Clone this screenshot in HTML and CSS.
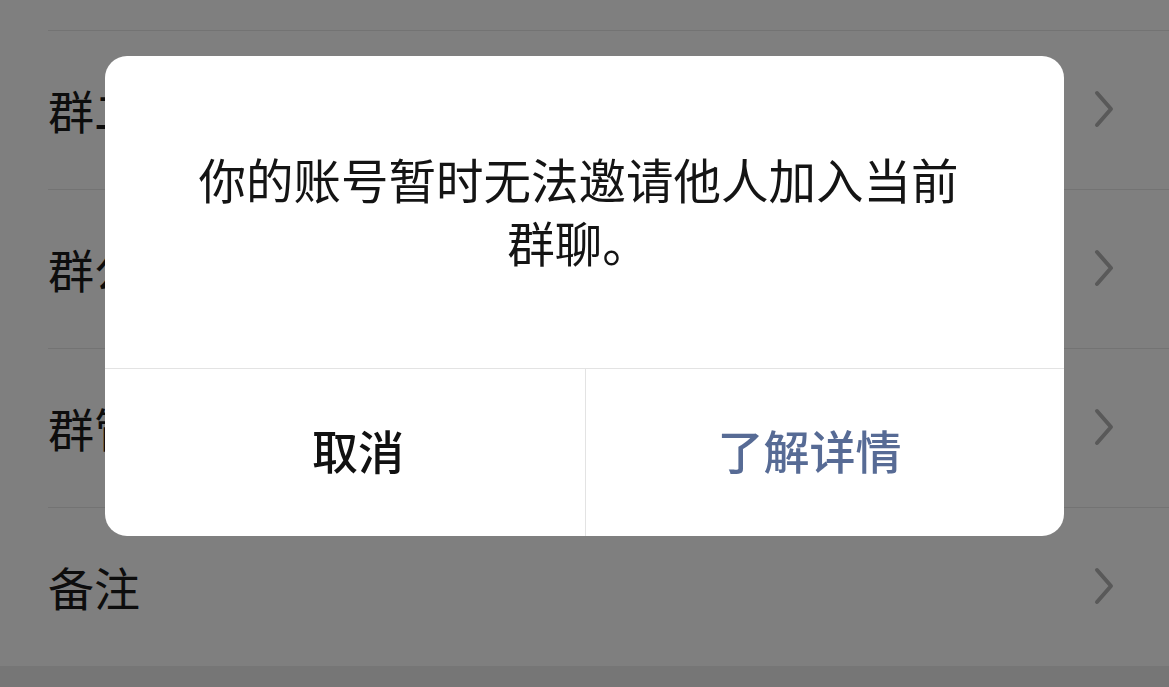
FILE: index.html
```html
<!DOCTYPE html>
<html lang="zh-CN">
<head>
<meta charset="utf-8">
<title>群聊信息</title>
<link rel="stylesheet" href="styles.css">
</head>
<body>
<div class="page">
  <div class="list">
    <div class="spacer"></div>
    <div class="row"><span class="label">群二维码</span><svg class="chev" viewBox="0 0 24 40" width="24" height="40"><path d="M5 4 L19 20 L5 36" fill="none" stroke="#b2b2b2" stroke-width="4" stroke-linecap="round" stroke-linejoin="round"/></svg></div>
    <div class="row"><span class="label">群公告</span><svg class="chev" viewBox="0 0 24 40" width="24" height="40"><path d="M5 4 L19 20 L5 36" fill="none" stroke="#b2b2b2" stroke-width="4" stroke-linecap="round" stroke-linejoin="round"/></svg></div>
    <div class="row"><span class="label">群管理</span><svg class="chev" viewBox="0 0 24 40" width="24" height="40"><path d="M5 4 L19 20 L5 36" fill="none" stroke="#b2b2b2" stroke-width="4" stroke-linecap="round" stroke-linejoin="round"/></svg></div>
    <div class="row"><span class="label">备注</span><svg class="chev" viewBox="0 0 24 40" width="24" height="40"><path d="M5 4 L19 20 L5 36" fill="none" stroke="#b2b2b2" stroke-width="4" stroke-linecap="round" stroke-linejoin="round"/></svg></div>
  </div>
</div>
<div class="mask">
  <div class="dialog">
    <div class="msg"><p class="msg-text">你的账号暂时无法邀请他人加入当前群聊。</p></div>
    <div class="actions">
      <div class="btn cancel">取消</div>
      <div class="btn primary">了解详情</div>
    </div>
  </div>
</div>
</body>
</html>
```

FILE: styles.css
```css
* { box-sizing: border-box; }
html, body {
  margin: 0;
  padding: 0;
  width: 1169px;
  height: 687px;
  overflow: hidden;
  background: #ededed;
  font-family: "Noto Sans CJK SC", "Noto Sans", sans-serif;
}
.page {
  height: 687px;
}
.list {
  background: #ffffff;
}
.spacer {
  height: 30px;
}
.row {
  height: 159px;
  margin-left: 48px;
  border-top: 1px solid #e6e6e6;
  display: flex;
  align-items: center;
  justify-content: space-between;
  padding-right: 53px;
  padding-bottom: 2px;
}
.label {
  font-size: 46px;
  color: #1a1a1a;
  line-height: 1;
}
.chev {
  display: block;
}
.mask {
  position: fixed;
  inset: 0;
  background: rgba(0, 0, 0, 0.5);
  display: flex;
  justify-content: center;
  align-items: flex-start;
  padding-top: 56px;
}
.dialog {
  width: 959px;
  background: #ffffff;
  border-radius: 22px;
  overflow: hidden;
}
.msg {
  height: 313px;
  padding: 0 96px 5px 84px;
  display: flex;
  align-items: center;
  justify-content: center;
  border-bottom: 1px solid #e3e3e3;
}
.msg-text {
  margin: 0;
  text-align: center;
  font-size: 47.5px;
  line-height: 63px;
  color: #141414;
}
.actions {
  display: flex;
  height: 167px;
}
.btn {
  display: flex;
  align-items: center;
  justify-content: center;
  font-size: 46px;
  font-weight: 500;
  line-height: 1;
  padding-bottom: 7px;
}
.cancel {
  flex: none;
  width: 481px;
  color: #111111;
  border-right: 1px solid #e3e3e3;
  padding-left: 26px;
}
.primary {
  flex: 1;
  color: #576b95;
  padding-right: 31px;
}
```
